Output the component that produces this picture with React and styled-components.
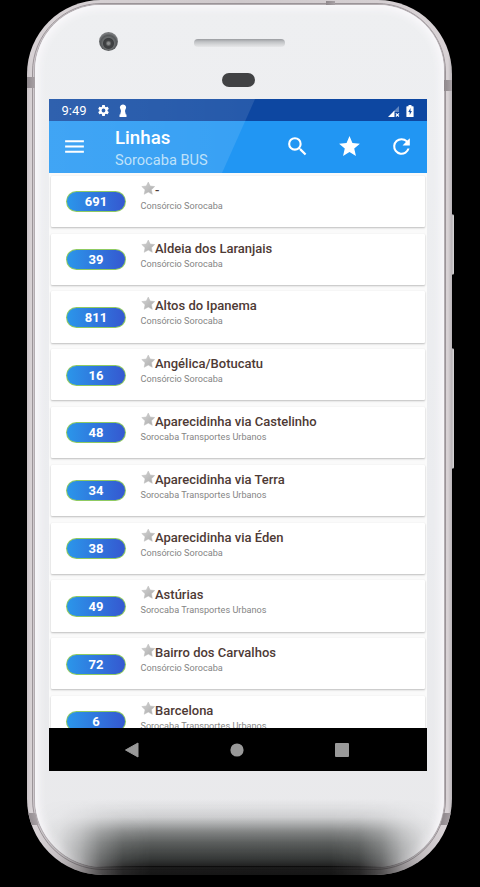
import React from "react";
import styled, { createGlobalStyle } from "styled-components";

const GlobalStyle = createGlobalStyle`
  * { box-sizing: border-box; }
  html, body { margin: 0; background: #000; }
  body { font-family: Roboto, sans-serif; overflow: hidden; }
  svg { display: block; flex: none; }
`;

const Stage = styled.main`
  width: 480px;
  height: 887px;
  background: #000;
  padding-left: 26.5px;
  overflow: hidden;
`;

const Frame = styled.div`
  position: relative;
  width: 425px;
  height: 875px;
`;

const SideKey = styled.i`
  position: absolute;
  left: 423px;
  top: ${(p) => p.$top}px;
  width: 4px;
  height: ${(p) => p.$height}px;
  border-radius: 1px 2px 2px 1px;
  border: 1px solid #77757a;
  border-right-color: #d3d1d3;
  background: #c4c0c3;
`;

const Shell = styled.div`
  position: relative;
  width: 425px;
  height: 875px;
  padding: 2px;
  overflow: hidden;
  border-radius: 74px 74px 76px 76px;
  background: linear-gradient(90deg, #c9c2c6 0, #d8d2d5 4px, #cfc9cc 50%, #d8d2d5 calc(100% - 4px), #b9b4b8 100%);
`;

const Rim = styled.div`
  position: absolute;
  inset: 3px 6px 5px 5px;
  border: 1px solid #9b9498;
  border-radius: 69px 69px 71px 71px;
  background: #cfc9cd;
`;

const Face = styled.div`
  position: absolute;
  inset: 5px 8px 8px 8px;
  border-radius: 66px 66px 68px 68px;
  background: linear-gradient(#eeeff1, #ebecef 60%, #e9e9eb);
  box-shadow: inset 0 0 9px 3px #fbf9fc, 0 0 0 1px #b3adb1;
`;

const Antenna = styled.i`
  position: absolute;
  left: ${(p) => p.$x}px;
  top: ${(p) => p.$y}px;
  width: ${(p) => p.$w}px;
  height: ${(p) => p.$h}px;
  background: linear-gradient(90deg, #8f888c, #a8a1a5);
  transform: skewX(${(p) => p.$skew || 0}deg);
`;

const Reflection = styled.i`
  position: absolute;
  left: 0;
  right: 0;
  bottom: 0;
  height: 76px;
  background: linear-gradient(
    rgba(40, 44, 42, 0) 0,
    rgba(40, 44, 42, 0.05) 8px,
    rgba(40, 44, 42, 0.14) 18px,
    rgba(40, 44, 42, 0.32) 25px,
    rgba(40, 44, 42, 0.54) 33px,
    rgba(40, 44, 42, 0.74) 44px,
    rgba(38, 41, 40, 0.92) 60px,
    rgba(20, 20, 20, 0.96) 68px,
    #151515 100%
  );
  mask-image: linear-gradient(
    90deg,
    transparent 10px,
    rgba(0, 0, 0, 0.12) 32px,
    rgba(0, 0, 0, 0.35) 52px,
    rgba(0, 0, 0, 0.7) 74px,
    rgba(0, 0, 0, 0.92) 96px,
    #000 124px,
    #000 304px,
    rgba(0, 0, 0, 0.92) 332px,
    rgba(0, 0, 0, 0.7) 354px,
    rgba(0, 0, 0, 0.35) 376px,
    rgba(0, 0, 0, 0.12) 396px,
    transparent 416px
  );
`;

const BottomEdge = styled.i`
  position: absolute;
  left: 70px;
  right: 70px;
  bottom: 8px;
  height: 1px;
  background: linear-gradient(90deg, transparent, #0c0c0c 20%, #0c0c0c 80%, transparent);
`;

const Hardware = styled.div`
  position: relative;
  height: 97px;
`;

const Camera = styled.i`
  position: absolute;
  left: 70px;
  top: 30px;
  width: 19px;
  height: 19px;
  border-radius: 50%;
  background: radial-gradient(circle at 50% 60%, #8a8c8c 0 1px, #404243 3px, #3c3e40 5px, #6b6e6f 6px, #55585a 8px, #77797b 10px);
`;

const Speaker = styled.i`
  position: absolute;
  left: 165px;
  top: 37px;
  width: 91px;
  height: 8px;
  border-radius: 4px;
  background: linear-gradient(#9a9ca0, #c0c2c5 35%, #d6d7d9 70%, #e6e7e9);
`;

const Sensor = styled.i`
  position: absolute;
  left: 193.5px;
  top: 71px;
  width: 33px;
  height: 14px;
  border-radius: 7px;
  background: #414244;
`;

const Screen = styled.div`
  position: relative;
  margin-left: 20.5px;
  width: 378px;
  height: 672px;
  display: flex;
  flex-direction: column;
  overflow: hidden;
  background: #fafafa;
`;

const Glare = styled.i`
  position: absolute;
  inset: 0 auto auto 0;
  width: 206px;
  height: 74px;
  clip-path: polygon(0 0, 100% 0, 173px 100%, 0 100%);
  background: linear-gradient(90deg, rgba(255, 255, 255, 0.14), rgba(255, 255, 255, 0.1));
`;

const StatusBar = styled.header`
  height: 22px;
  flex: none;
  display: flex;
  align-items: center;
  padding: 1px 13px 0 12.5px;
  background: #0d47a1;
  color: #fff;
`;

const Clock = styled.time`
  width: 35.5px;
  font-size: 13px;
  line-height: 20px;
`;

const StatusIcons = styled.div`
  display: flex;
  align-items: center;
  gap: ${(p) => p.$gap}px;
  margin-left: ${(p) => (p.$end ? "auto" : "0")};
`;

const Toolbar = styled.nav`
  height: 52px;
  flex: none;
  display: flex;
  align-items: center;
  padding: 0 13px 1px;
  background: #2196f3;
  color: #fff;
`;

const Heading = styled.div`
  margin-left: 28px;
  padding-top: 4px;
  flex: 1;
`;

const Title = styled.h1`
  margin: 0;
  font-size: 18.7px;
  line-height: 22px;
  font-weight: 500;
`;

const Subtitle = styled.div`
  font-size: 14.6px;
  line-height: 20px;
  margin-top: 1px;
  color: #b5def9;
`;

const Actions = styled.div`
  display: flex;
  gap: 27px;
`;

const List = styled.ul`
  flex: 1;
  min-height: 0;
  overflow: hidden;
  margin: 0;
  padding: 2.8px 2.5px 0 2px;
  list-style: none;
`;

const Card = styled.li`
  height: 51.3px;
  margin-bottom: 6.5px;
  display: flex;
  background: #fff;
  border-radius: 1px;
  box-shadow: 0 1px 2px rgba(0, 0, 0, 0.24), 0 0 1px rgba(0, 0, 0, 0.06);
`;

const Badge = styled.span`
  width: 60px;
  height: 21px;
  margin: 15.5px 0 0 15px;
  padding: 1px;
  border-radius: 10.5px;
  background: #8fca62;
`;

const BadgeFill = styled.span`
  display: block;
  height: 19px;
  border-radius: 9.5px;
  background: linear-gradient(90deg, #2b96ea, #3558d0);
  color: #fff;
  font-size: 13px;
  line-height: 20px;
  font-weight: 700;
  text-align: center;
`;

const Info = styled.div`
  margin-left: 14.5px;
  padding-top: 5px;
`;

const Name = styled.div`
  display: flex;
  height: 16px;
  font-size: 13px;
  line-height: 20px;
  font-weight: 500;
  color: #4e3a35;
  white-space: nowrap;
`;

const Company = styled.div`
  margin-top: 3px;
  font-size: 9.15px;
  line-height: 12px;
  color: #858585;
  white-space: nowrap;
`;

const NavBar = styled.footer`
  height: 43px;
  flex: none;
  display: flex;
  align-items: center;
  justify-content: space-between;
  padding: 0 77px 0 75px;
  background: #000;
`;

const FavStar = () => (
  <svg width="14.5" height="15" viewBox="0 0 15 15">
    <defs>
      <linearGradient id="silver" x1="0" y1="0" x2="1" y2="1">
        <stop offset="0" stopColor="#d4d4d4" />
        <stop offset="1" stopColor="#aaa" />
      </linearGradient>
    </defs>
    <path d="M7.5.8l2 4.1 4.7.6-3.4 3.2.9 4.8-4.2-2.3-4.2 2.3.9-4.8L.8 5.5l4.7-.6z" fill="url(#silver)" stroke="#bcbcbc" strokeWidth=".5" strokeLinejoin="round" />
  </svg>
);

const Icon = ({ size = 25, d }) => (
  <svg width={size} height={size} viewBox="0 0 24 24" fill="currentColor">
    <path d={d} />
  </svg>
);

const MENU = "M3 18h18v-2H3v2zm0-5h18v-2H3v2zm0-7v2h18V6H3z";
const SEARCH = "M15.5 14h-.79l-.28-.27A6.47 6.47 0 0 0 16 9.5 6.5 6.5 0 1 0 9.5 16c1.61 0 3.09-.59 4.23-1.57l.27.28v.79l5 4.99L20.49 19l-4.99-5zm-6 0a4.5 4.5 0 1 1 0-9 4.5 4.5 0 0 1 0 9z";
const STAR = "M12 17.27L18.18 21l-1.64-7.03L22 9.24l-7.19-.61L12 2 9.19 8.63 2 9.24l5.46 4.73L5.82 21z";
const REFRESH = "M17.65 6.35A7.96 7.96 0 0 0 12 4a8 8 0 1 0 7.73 10h-2.08A6 6 0 1 1 12 6c1.66 0 3.14.69 4.22 1.78L13 11h7V4l-2.35 2.35z";
const GEAR = "M19.43 12.98c.04-.32.07-.64.07-.98s-.03-.66-.07-.98l2.11-1.65c.19-.15.24-.42.12-.64l-2-3.46c-.12-.22-.39-.3-.61-.22l-2.49 1c-.52-.4-1.08-.73-1.69-.98l-.38-2.65A.49.49 0 0 0 14 2h-4c-.25 0-.46.18-.49.42l-.38 2.65c-.61.25-1.17.59-1.69.98l-2.49-1c-.23-.09-.49 0-.61.22l-2 3.46c-.13.22-.07.49.12.64l2.11 1.65c-.04.32-.07.65-.07.98s.03.66.07.98l-2.11 1.65c-.19.15-.24.42-.12.64l2 3.46c.12.22.39.3.61.22l2.49-1c.52.4 1.08.73 1.69.98l.38 2.65c.03.24.24.42.49.42h4c.25 0 .46-.18.49-.42l.38-2.65c.61-.25 1.17-.59 1.69-.98l2.49 1c.23.09.49 0 .61-.22l2-3.46c.12-.22.07-.49-.12-.64l-2.11-1.65zM12 15.5a3.5 3.5 0 1 1 0-7 3.5 3.5 0 0 1 0 7z";

const lines = [
  ["691", "-", "Consórcio Sorocaba"],
  ["39", "Aldeia dos Laranjais", "Consórcio Sorocaba"],
  ["811", "Altos do Ipanema", "Consórcio Sorocaba"],
  ["16", "Angélica/Botucatu", "Consórcio Sorocaba"],
  ["48", "Aparecidinha via Castelinho", "Sorocaba Transportes Urbanos"],
  ["34", "Aparecidinha via Terra", "Sorocaba Transportes Urbanos"],
  ["38", "Aparecidinha via Éden", "Consórcio Sorocaba"],
  ["49", "Astúrias", "Sorocaba Transportes Urbanos"],
  ["72", "Bairro dos Carvalhos", "Consórcio Sorocaba"],
  ["6", "Barcelona", "Sorocaba Transportes Urbanos"],
];

export default function App() {
  return (
    <Stage>
      <GlobalStyle />
      <Frame>
        <SideKey $top={214} $height={61} />
        <SideKey $top={348} $height={121} />
        <Shell>
          <Rim />
          <Face />
          <Antenna $x={0} $y={77} $w={8} $h={11} />
          <Antenna $x={417} $y={80} $w={8} $h={11} />
          <Antenna $x={299} $y={1} $w={9} $h={4} />
          <Antenna $x={1} $y={813} $w={9} $h={12} $skew={14} />
          <Antenna $x={415} $y={813} $w={9} $h={12} $skew={-14} />
          <Reflection />
          <BottomEdge />
          <Hardware>
            <Camera />
            <Speaker />
            <Sensor />
          </Hardware>
          <Screen>
            <StatusBar>
              <Clock>9:49</Clock>
              <StatusIcons $gap={8}>
                <Icon size={13} d={GEAR} />
                <svg width="10" height="14" viewBox="0 0 10 14" fill="#fff">
                  <path d="M5 .5a3 3 0 0 1 2.500 4.800L7 7l.8 3.500H8.500V13h-7v-2.500h.7L3 7l-.5-1.700A3 3 0 0 1 5 .5z" />
                </svg>
              </StatusIcons>
              <StatusIcons $gap={6} $end>
                <svg width="12" height="12" viewBox="0 0 12 12" fill="#fff">
                  <path d="M11 1v6H5z" opacity=".35" />
                  <path d="M0 12l6.500-6.500V12z" />
                  <path d="M7.800 8.300l3.200 3.200m0-3.200l-3.200 3.200" stroke="#fff" strokeWidth="1.100" />
                </svg>
                <svg width="8" height="12" viewBox="0 0 8 12">
                  <path d="M2.500 0h3v1.200H7a.6.6 0 0 1 .6.6v9.600a.6.6 0 0 1-.6.6H1a.6.6 0 0 1-.6-.6V1.800a.6.6 0 0 1 .6-.6h1.500z" fill="#fff" />
                  <path d="M4.500 3L2.300 7h1.400v3l2.200-4H4.500z" fill="#0d47a1" />
                </svg>
              </StatusIcons>
            </StatusBar>
            <Toolbar>
              <Icon d={MENU} />
              <Heading>
                <Title>Linhas</Title>
                <Subtitle>Sorocaba BUS</Subtitle>
              </Heading>
              <Actions>
                <Icon d={SEARCH} />
                <Icon d={STAR} />
                <Icon d={REFRESH} />
              </Actions>
            </Toolbar>
            <List>
              {lines.map(([code, name, company]) => (
                <Card key={code}>
                  <Badge><BadgeFill>{code}</BadgeFill></Badge>
                  <Info>
                    <Name><FavStar />{name}</Name>
                    <Company>{company}</Company>
                  </Info>
                </Card>
              ))}
            </List>
            <NavBar>
              <svg width="16" height="16" viewBox="0 0 16 16"><path d="M14 1v14L1.500 8z" fill="#999" stroke="#999" strokeLinejoin="round" /></svg>
              <svg width="14" height="14" viewBox="0 0 14 14"><circle cx="7" cy="7" r="6.600" fill="#999" /></svg>
              <svg width="16" height="16" viewBox="0 0 16 16"><rect x="1" y="1" width="14" height="14" rx="1" fill="#999" /></svg>
            </NavBar>
            <Glare />
          </Screen>
        </Shell>
      </Frame>
    </Stage>
  );
}
